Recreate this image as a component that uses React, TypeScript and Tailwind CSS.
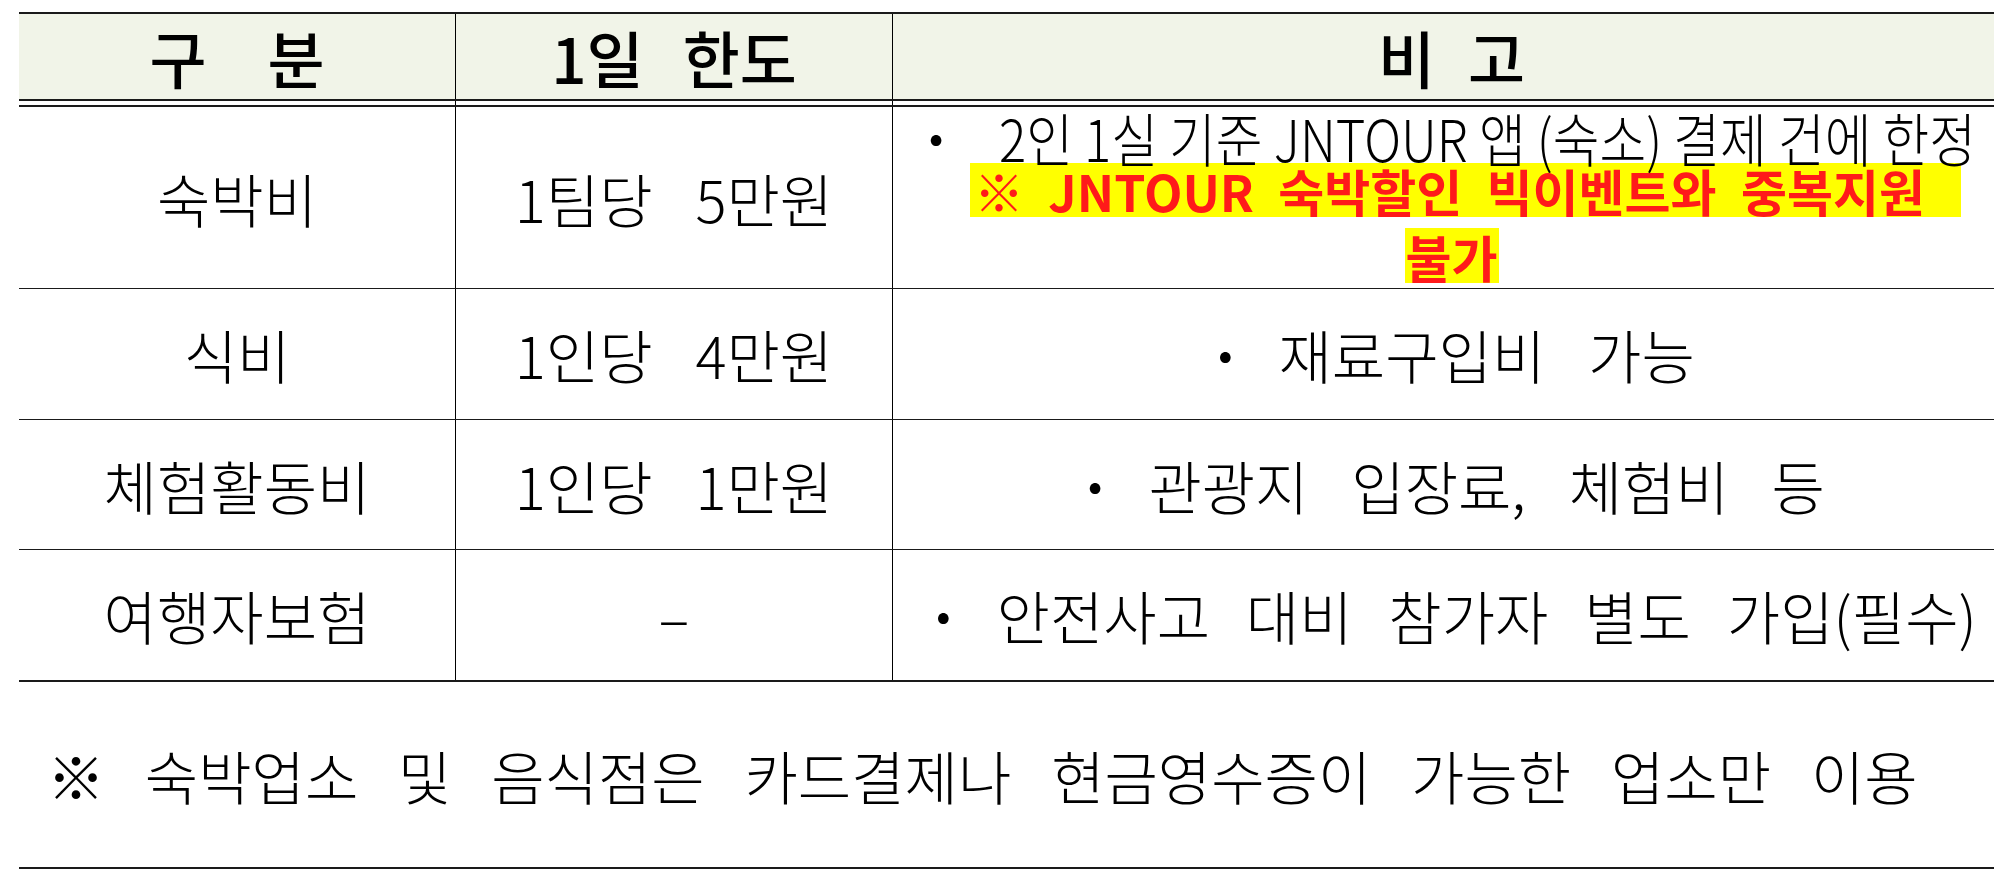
import React from 'react'

const cols = 'grid grid-cols-[436px_437px_1118px]'

function Cell({ children, first = false, className = '' }: { children?: React.ReactNode; first?: boolean; className?: string }) {
  return (
    <div className={`flex items-center justify-center ${first ? '' : 'border-l border-black'} ${className}`}>
      {children}
    </div>
  )
}

function Remark({ text }: { text: string }) {
  return (
    <span className="flex items-center">
      <span className="font-bold">·</span>
      <span className="ml-[36px]">{text}</span>
    </span>
  )
}

const rows = [
  { name: '식비', limit: '1인당 4만원', note: '재료구입비 가능', h: 'h-[131px]' },
  { name: '체험활동비', limit: '1인당 1만원', note: '관광지 입장료, 체험비 등', h: 'h-[130px]' },
]

export default function App() {
  return (
    <div className="w-[1994px] h-[878px] overflow-hidden bg-white pt-[12px] pl-[19px] text-black font-['Noto_Sans_CJK_KR','Noto_Sans_CJK_SC',sans-serif] [word-spacing:30px]">
      <div className="w-[1991px]">
        {/* header */}
        <div className={`${cols} h-[89px] border-t-2 border-b-2 border-[#1a1a1a] bg-[#f1f4e8] text-[62px] font-medium leading-none`}>
          <Cell first>
            <span>구</span>
            <span className="ml-[61px]">분</span>
          </Cell>
          <Cell>
            <span>1일</span>
            <span className="ml-[39px]">한도</span>
          </Cell>
          <Cell>
            <span>비</span>
            <span className="ml-[33px]">고</span>
          </Cell>
        </div>
        <div className={`${cols} h-[4px]`}>
          <div />
          <div className="border-l border-black" />
          <div className="border-l border-black" />
        </div>

        <div className="text-[58px] font-light leading-none">
          {/* 숙박비 */}
          <div className={`${cols} h-[184px] border-t-2 border-b border-[#1a1a1a]`}>
            <Cell first>숙박비</Cell>
            <Cell>1팀당 5만원</Cell>
            <div className="border-l border-black flex flex-col">
              <div className="h-[56px] flex items-center pt-[3px] pl-[26px] leading-[46px]">
                <span className="font-bold">·</span>
                <span className="ml-[46px] inline-block origin-left scale-x-[0.875] whitespace-nowrap [word-spacing:0px]">
                  2인 1실 기준 JNTOUR 앱 (숙소) 결제 건에 한정
                </span>
              </div>
              <div className="flex justify-center">
                <span className="ml-[28px] h-[54px] flex items-center bg-[#ffff00] pl-[4px] pr-[36px] text-[50px] font-bold text-[#ff1a1a] [word-spacing:13px]">
                  ※ JNTOUR 숙박할인 빅이벤트와 중복지원
                </span>
              </div>
              <div className="flex justify-center mt-[11px]">
                <span className="h-[55px] flex items-center bg-[#ffff00] px-[1px] text-[50px] font-bold text-[#ff1a1a]">
                  불가
                </span>
              </div>
            </div>
          </div>

          {rows.map((r) => (
            <div key={r.name} className={`${cols} ${r.h} border-b border-[#1a1a1a]`}>
              <Cell first>{r.name}</Cell>
              <Cell>{r.limit}</Cell>
              <Cell>
                <Remark text={r.note} />
              </Cell>
            </div>
          ))}

          <div className={`${cols} h-[132px] border-b-2 border-[#1a1a1a]`}>
            <Cell first>여행자보험</Cell>
            <Cell>–</Cell>
            <Cell>
              <span className="flex items-center [word-spacing:23px]">
                <span className="font-bold">·</span>
                <span className="ml-[36px]">안전사고 대비 참가자 별도 가입(필수)</span>
              </span>
            </Cell>
          </div>

          {/* footnote */}
          <div className="h-[187px] border-b-2 border-[#1a1a1a] flex items-center pl-[28px] [word-spacing:27px]">
            ※ 숙박업소 및 음식점은 카드결제나 현금영수증이 가능한 업소만 이용
          </div>
        </div>
      </div>
    </div>
  )
}
